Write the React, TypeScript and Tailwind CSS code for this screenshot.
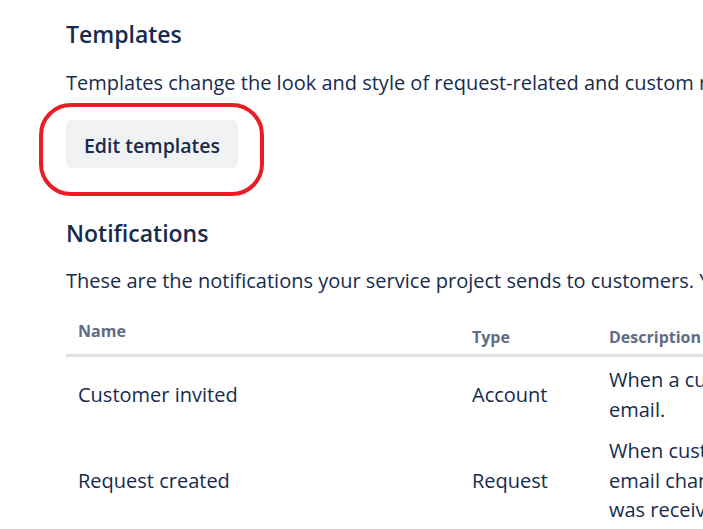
import React from "react";

const font = { fontFamily: '"Open Sans", "Noto Sans", sans-serif' };

export default function App() {
  return (
    <div
      className="relative w-[703px] h-[529px] overflow-hidden bg-white text-[#172b4d]"
      style={font}
    >
      <div className="pl-[66px] pt-[18px] w-[1100px]">
        <h2 className="text-[23px] leading-[32px] font-semibold">Templates</h2>
        <p className="mt-[19px] text-[20px] leading-[28px] whitespace-nowrap">
          Templates change the look and style of request-related and custom notifications.
        </p>
        <button className="mt-[23px] h-[48px] w-[172px] pt-[3px] rounded-[5px] bg-[#f1f2f4] text-[19.5px] font-semibold text-[#172b4d]">
          Edit templates
        </button>
        <h2 className="mt-[49px] text-[23px] leading-[32px] font-semibold">Notifications</h2>
        <p className="mt-[18px] text-[20px] leading-[28px] whitespace-nowrap">
          These are the notifications your service project sends to customers. You can customize them.
        </p>

        <div className="mt-[20px]">
          <div className="flex h-[39px] border-b-[3px] border-[#dfe1e6] box-content text-[16px] font-bold text-[#5e6c84]">
            <div className="w-[394px] shrink-0 pl-[12px] pt-[4px] leading-[24px]">Name</div>
            <div className="w-[137px] shrink-0 pl-[12px] pt-[10px] leading-[24px]">Type</div>
            <div className="shrink-0 pl-[12px] pt-[10px] leading-[24px]">Description</div>
          </div>

          <div className="flex items-center text-[20px] pt-[8px] pb-[6px]">
            <div className="w-[394px] shrink-0 pl-[12px]">Customer invited</div>
            <div className="w-[137px] shrink-0 pl-[12px]">Account</div>
            <div className="shrink-0 pl-[12px] leading-[29.5px] whitespace-nowrap">
              When a customer is invited to your service project, they receive an
              <br />
              email.
            </div>
          </div>

          <div className="flex items-center text-[20px] pt-[6px]">
            <div className="w-[394px] shrink-0 pl-[12px] pt-[2px]">Request created</div>
            <div className="w-[137px] shrink-0 pl-[12px] pt-[2px]">Request</div>
            <div className="shrink-0 pl-[12px] leading-[29.5px] whitespace-nowrap">
              When customers raise a request through the portal or
              <br />
              email channel, they receive this email to confirm their request
              <br />
              was received.
            </div>
          </div>
        </div>
      </div>

      <div className="absolute left-[39px] top-[103px] w-[225px] h-[93px] border-[4px] border-[#e81d25] rounded-[32px]" />
    </div>
  );
}
